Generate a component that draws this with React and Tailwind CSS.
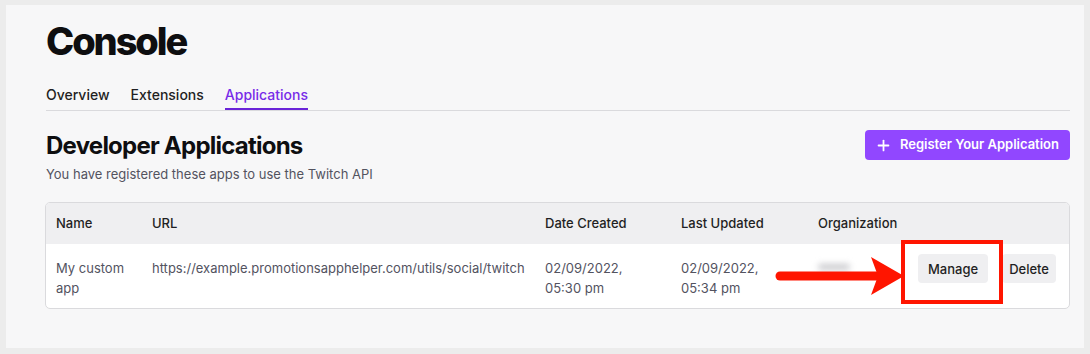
import { Plus } from "lucide-react";

const font = { fontFamily: "Inter, 'Noto Sans', sans-serif" };

function Tab({ label, active }) {
  return (
    <div
      className={
        "pb-[3px] pt-[1px] text-[14px] font-medium leading-5 border-b-2 " +
        (active ? "text-[#772ce8] border-[#6a24d8]" : "text-[#1f1f23] border-transparent")
      }
    >
      {label}
    </div>
  );
}

function Arrow() {
  return (
    <svg className="absolute left-[762px] top-[248px]" width="140" height="46" viewBox="0 0 140 46">
      <line x1="12" y1="23" x2="112" y2="23" stroke="#ff1500" strokeWidth="9" strokeLinecap="round" />
      <polygon points="103,4 136,23 103,42 110,23" fill="#ff1500" />
    </svg>
  );
}

export default function App() {
  return (
    <div style={font} className="w-[1090px] h-[354px] bg-[#ececec] pt-[5px] pl-[6px] pr-[6px] pb-[6px]">
      <div className="relative h-full bg-[#f7f7f8] pl-[40px] pr-[14px] pt-[17px]">
        {/* Title */}
        <h1 className="text-[38px] font-extrabold leading-none tracking-[-0.055em] text-[#0e0e10]">Console</h1>

        {/* Tabs */}
        <div className="mt-[24px] flex gap-[21px] border-b border-[#dadadd]">
          <Tab label="Overview" />
          <Tab label="Extensions" />
          <Tab label="Applications" active />
        </div>

        {/* Header */}
        <div className="mt-[19px] flex items-start justify-between">
          <div>
            <h2 className="text-[24px] font-bold leading-8 tracking-[-0.032em] text-[#0e0e10]">Developer Applications</h2>
            <p className="mt-[2px] text-[13px] leading-5 text-[#53535f]">You have registered these apps to use the Twitch API</p>
          </div>
          <button className="flex h-[30px] items-center gap-[8px] rounded-[4px] bg-[#9147ff] pl-[10px] pr-[11px] text-[13px] font-semibold text-white">
            <Plus size={17} strokeWidth={2.5} />
            Register Your Application
          </button>
        </div>

        {/* Table */}
        <div className="mt-[18px] -ml-[1px] overflow-hidden rounded-[5px] border border-[#dadadd] bg-white text-[13px]">
          <div className="flex h-[41px] items-center bg-[#efeff1] font-medium text-[#1f1f23]">
            <div className="w-[96px] pl-[10px]">Name</div>
            <div className="w-[393px] pl-[10px]">URL</div>
            <div className="w-[136px] pl-[10px]">Date Created</div>
            <div className="w-[137px] pl-[10px]">Last Updated</div>
            <div className="pl-[10px]">Organization</div>
          </div>
          <div className="flex h-[64px] items-start leading-5 text-[#53535f]">
            <div className="w-[96px] pl-[10px] pt-[14px]">My custom<br />app</div>
            <div className="w-[393px] pl-[10px] pt-[14px]">https://example.promotionsapphelper.com/utils/social/twitch</div>
            <div className="w-[136px] pl-[10px] pt-[14px]">02/09/2022,<br />05:30 pm</div>
            <div className="w-[137px] pl-[10px] pt-[14px]">02/09/2022,<br />05:34 pm</div>
            <div className="w-[110px] pl-[10px] pt-[20px]">
              <div className="h-[6px] w-[32px] rounded-full bg-[#c8c8cc] blur-[3px]" />
            </div>
            <div className="flex gap-[14px] pt-[10px]">
              <button className="h-[29px] rounded-[4px] bg-[#efeff1] px-[10px] font-medium text-[#1f1f23]">Manage</button>
              <button className="h-[29px] rounded-[4px] bg-[#efeff1] px-[7px] font-medium text-[#1f1f23]">Delete</button>
            </div>
          </div>
        </div>

        {/* Annotation */}
        <Arrow />
        <div className="absolute left-[895px] top-[235px] h-[64px] w-[102px] border-4 border-[#ff1500]" />
      </div>
    </div>
  );
}
